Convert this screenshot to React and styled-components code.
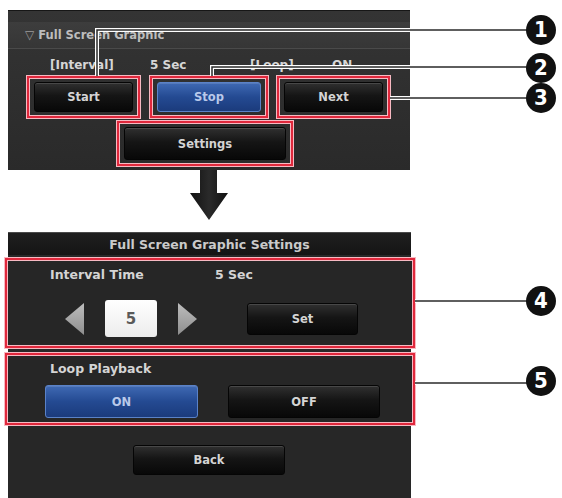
import React from 'react'
import styled, { createGlobalStyle } from 'styled-components'

const GlobalStyle = createGlobalStyle`
  html, body { margin: 0; padding: 0; background: #fff; }
  body { font-family: "DejaVu Sans", "Liberation Sans", sans-serif; }
`

const Canvas = styled.div`
  position: relative;
  width: 562px;
  height: 498px;
  overflow: hidden;
  background: #fff;
`

const Column = styled.div`
  display: flex;
  flex-direction: column;
  padding-left: 8px;
`

const TopPanel = styled.section`
  width: 402px;
  height: 160px;
  margin-top: 10px;
  box-sizing: border-box;
  border-top: 1px solid #161616;
  background: linear-gradient(#343434, #2a2a2a);
  display: flex;
  flex-direction: column;
`

const PanelHeader = styled.div`
  margin-top: 11px;
  height: 26px;
  padding-left: 17px;
  display: flex;
  align-items: center;
  gap: 4px;
  background: linear-gradient(#3d3d3d, #363636);
  border-bottom: 1px solid #4a4a4a;
  color: #bdbdbd;
  font-weight: bold;
  font-size: 11.5px;
`

const Caret = styled.span`
  font-weight: normal;
  font-size: 12px;
  color: #9a9a9a;
`

const InfoRow = styled.div`
  margin-top: 8px;
  height: 16px;
  padding-left: 42px;
  display: grid;
  grid-template-columns: 100px 100px 82px auto;
  align-items: center;
  color: #d6d6d6;
  font-weight: bold;
  font-size: 12px;
`

const ButtonRow = styled.div`
  margin-top: 3px;
  padding-left: ${p => p.$pad}px;
  display: flex;
  gap: ${p => p.$gap || 0}px;
`

const Highlight = styled.div`
  box-sizing: border-box;
  width: ${p => p.$w}px;
  height: ${p => p.$h}px;
  padding: 4px 5px;
  border: 2px solid #e0283c;
  box-shadow: 0 0 0 1px #f7b9c2, inset 0 0 0 1px #f7b9c2;
  display: flex;
`

const Button = styled.button`
  box-sizing: border-box;
  width: ${p => (p.$w ? `${p.$w}px` : '100%')};
  height: ${p => (p.$h ? `${p.$h}px` : '100%')};
  padding: 0;
  border-radius: 3px;
  border: 1px solid ${p => (p.$active ? '#5a82c8' : '#050505')};
  background: ${p =>
    p.$active
      ? 'linear-gradient(#3f69b3, #244a92 50%, #1b3b7c)'
      : 'linear-gradient(#303030, #151515 45%, #080808)'};
  box-shadow: inset 0 1px 0 rgba(255, 255, 255, 0.12);
  color: ${p => (p.$active ? '#b9c9ea' : '#d4d4d4')};
  font-family: "DejaVu Sans", "Liberation Sans", sans-serif;
  font-weight: bold;
  font-size: 11.5px;
`

const Arrow = styled.svg`
  display: block;
  margin-left: 182px;
  margin-bottom: 12px;
`

const BottomPanel = styled.section`
  width: 403px;
  height: 266px;
  background: #272727;
  display: flex;
  flex-direction: column;
`

const TitleBar = styled.div`
  height: 23px;
  display: flex;
  align-items: center;
  justify-content: center;
  background: linear-gradient(#1f1f1f, #141414);
  border-top: 1px solid #4a4a4a;
  box-sizing: border-box;
  color: #cacaca;
  font-weight: bold;
  font-size: 12.5px;
`

const Section = styled.div`
  box-sizing: border-box;
  height: ${p => p.$h}px;
  margin: ${p => p.$top}px -4px 0 -3px;
  padding: ${p => p.$padTop}px 0 0 43px;
  border: 2px solid #e0283c;
  box-shadow: 0 0 0 1px #f7b9c2, inset 0 0 0 1px #f7b9c2;
  background: #262626;
  display: flex;
  flex-direction: column;
`

const LabelRow = styled.div`
  height: 18px;
  display: grid;
  grid-template-columns: 165px auto;
  align-items: center;
  color: #d4d4d4;
  font-weight: bold;
  font-size: 12.5px;
`

const Controls = styled.div`
  margin-top: ${p => p.$top}px;
  margin-left: ${p => p.$left}px;
  display: flex;
  align-items: center;
`

const Spacer = styled.div`
  width: ${p => p.$w}px;
  flex: none;
`

const NumberBox = styled.div`
  width: 52px;
  height: 37px;
  border-radius: 3px;
  background: linear-gradient(#ffffff, #ececec);
  display: flex;
  align-items: center;
  justify-content: center;
  color: #5a5a5a;
  font-weight: bold;
  font-size: 15px;
`

const BackRow = styled.div`
  margin-top: 20px;
  padding-left: 125px;
`

const Overlay = styled.svg`
  position: absolute;
  left: 0;
  top: 0;
  pointer-events: none;
`

const Badge = styled.div`
  position: absolute;
  left: 526px;
  top: ${p => p.$y - 15}px;
  width: 30px;
  height: 30px;
  border-radius: 50%;
  background: #111;
  display: flex;
  align-items: center;
  justify-content: center;
  color: #fff;
  font-family: "DejaVu Sans Condensed", "DejaVu Sans", sans-serif;
  font-weight: bold;
  font-size: 22px;
  line-height: 1;
`

const Triangle = ({ dir }) => (
  <svg width="19" height="32" viewBox="0 0 19 32">
    <defs>
      <linearGradient id={`tri-${dir}`} x1="0" y1="0" x2="0" y2="1">
        <stop offset="0" stopColor="#bdbdbd" />
        <stop offset="1" stopColor="#8e8e8e" />
      </linearGradient>
    </defs>
    <polygon
      points={dir === 'left' ? '19,0 19,32 0,16' : '0,0 0,32 19,16'}
      fill={`url(#tri-${dir})`}
    />
  </svg>
)

const leads = [
  '97,76 97,30 527,30',
  '212,76 212,67 527,67',
  '390,98 527,98',
  '415,301 527,301',
  '415,383 527,383',
]

const badges = [
  { n: 1, y: 30 },
  { n: 2, y: 68 },
  { n: 3, y: 98 },
  { n: 4, y: 301 },
  { n: 5, y: 381 },
]

export default function App() {
  return (
    <Canvas>
      <GlobalStyle />
      <Column>
        <TopPanel>
          <PanelHeader>
            <Caret>▽</Caret>
            Full Screen Graphic
          </PanelHeader>
          <InfoRow>
            <span>[Interval]</span>
            <span>5 Sec</span>
            <span>[Loop]</span>
            <span>ON</span>
          </InfoRow>
          <ButtonRow $pad={19} $gap={10}>
            <Highlight $w={113} $h={42}>
              <Button>Start</Button>
            </Highlight>
            <Highlight $w={118} $h={42}>
              <Button $active>Stop</Button>
            </Highlight>
            <Highlight $w={113} $h={42} style={{ marginLeft: -1 }}>
              <Button>Next</Button>
            </Highlight>
          </ButtonRow>
          <ButtonRow $pad={109}>
            <Highlight $w={176} $h={45}>
              <Button>Settings</Button>
            </Highlight>
          </ButtonRow>
        </TopPanel>

        <Arrow width="38" height="50" viewBox="0 0 38 50">
          <defs>
            <linearGradient id="arrowFill" x1="0" y1="0" x2="1" y2="0">
              <stop offset="0" stopColor="#111" />
              <stop offset="0.5" stopColor="#2a2a2a" />
              <stop offset="1" stopColor="#111" />
            </linearGradient>
          </defs>
          <polygon points="10,0 27,0 27,23 38,23 19,50 0,23 10,23" fill="url(#arrowFill)" />
        </Arrow>

        <BottomPanel>
          <TitleBar>Full Screen Graphic Settings</TitleBar>
          <Section $h={90} $top={3} $padTop={5}>
            <LabelRow>
              <span>Interval Time</span>
              <span>5 Sec</span>
            </LabelRow>
            <Controls $top={17} $left={15}>
              <Triangle dir="left" />
              <Spacer $w={21} />
              <NumberBox>5</NumberBox>
              <Spacer $w={21} />
              <Triangle dir="right" />
              <Spacer $w={50} />
              <Button $w={111} $h={32}>Set</Button>
            </Controls>
          </Section>
          <Section $h={72} $top={5} $padTop={4}>
            <LabelRow>
              <span>Loop Playback</span>
            </LabelRow>
            <Controls $top={8} $left={-5}>
              <Button $active $w={153} $h={33}>ON</Button>
              <Spacer $w={30} />
              <Button $w={152} $h={33}>OFF</Button>
            </Controls>
          </Section>
          <BackRow>
            <Button $w={152} $h={30}>Back</Button>
          </BackRow>
        </BottomPanel>
      </Column>

      <Overlay width="562" height="498" viewBox="0 0 562 498">
        {leads.map(pts => (
          <g key={pts}>
            <polyline points={pts} fill="none" stroke="#fff" strokeWidth="4" />
            <polyline points={pts} fill="none" stroke="#2a2a2a" strokeWidth="1.5" />
          </g>
        ))}
      </Overlay>
      {badges.map(b => (
        <Badge key={b.n} $y={b.y}>{b.n}</Badge>
      ))}
    </Canvas>
  )
}
